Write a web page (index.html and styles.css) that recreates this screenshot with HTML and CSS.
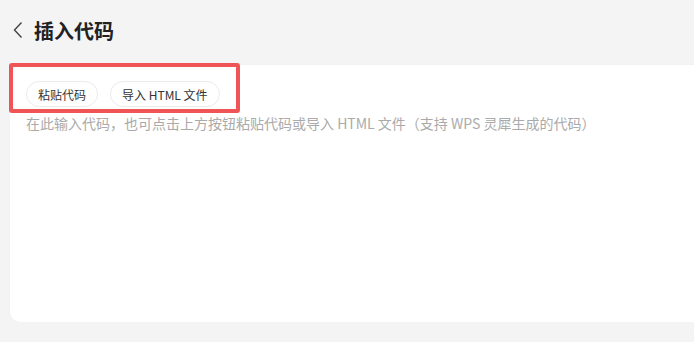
FILE: index.html
```html
<!DOCTYPE html>
<html lang="zh-CN">
<head>
  <meta charset="UTF-8">
  <title>插入代码</title>
  <link rel="stylesheet" href="styles.css">
</head>
<body>

  <div class="top">
    <svg class="back" width="12" height="18" viewBox="0 0 12 18">
      <path d="M9.5 1.5 L2.5 9 L9.5 16.5" fill="none" stroke="#444" stroke-width="1.4"/>
    </svg>
    <h1>插入代码</h1>
  </div>

  <div class="card">
    <div class="mark"></div>
    <div class="tools">
      <button class="pill">粘贴代码</button>
      <button class="pill">导入 HTML 文件</button>
    </div>
    <div class="hint">在此输入代码，也可点击上方按钮粘贴代码或导入 HTML 文件（支持 WPS 灵犀生成的代码）</div>
  </div>

</body>
</html>
```
FILE: styles.css
```css
body {
  margin: 0;
  background: #f4f4f4;
  font-family: "Noto Sans CJK SC", "Noto Sans", sans-serif;
  overflow: hidden;
}

.top {
  display: flex;
  align-items: center;
  height: 60px;
  padding-left: 12px;
  gap: 10px;
}

.top h1 {
  margin: 0;
  font-size: 20px;
  font-weight: bold;
  color: #222;
}

.back {
  display: block;
}

.card {
  position: relative;
  background: #fff;
  margin: 5px -30px 0 10px;
  height: 257px;
  border-radius: 10px;
  padding: 16px 16px;
  box-sizing: border-box;
  box-shadow: 0 0 2px rgba(0, 0, 0, 0.04);
}

.mark {
  position: absolute;
  left: -1px;
  top: -2px;
  width: 223px;
  height: 42px;
  border: 4px solid #ef5457;
  border-radius: 3px;
}

.tools {
  display: flex;
  gap: 12px;
}

.pill {
  height: 26px;
  padding: 0 11px;
  border: 1px solid #ebebeb;
  border-radius: 13px;
  background: #fff;
  font-family: inherit;
  font-size: 12px;
  color: #333;
}

.pill.wide {
  padding: 0 10px;
}

.hint {
  margin-top: 6px;
  font-size: 14px;
  color: #aaa;
}
```
